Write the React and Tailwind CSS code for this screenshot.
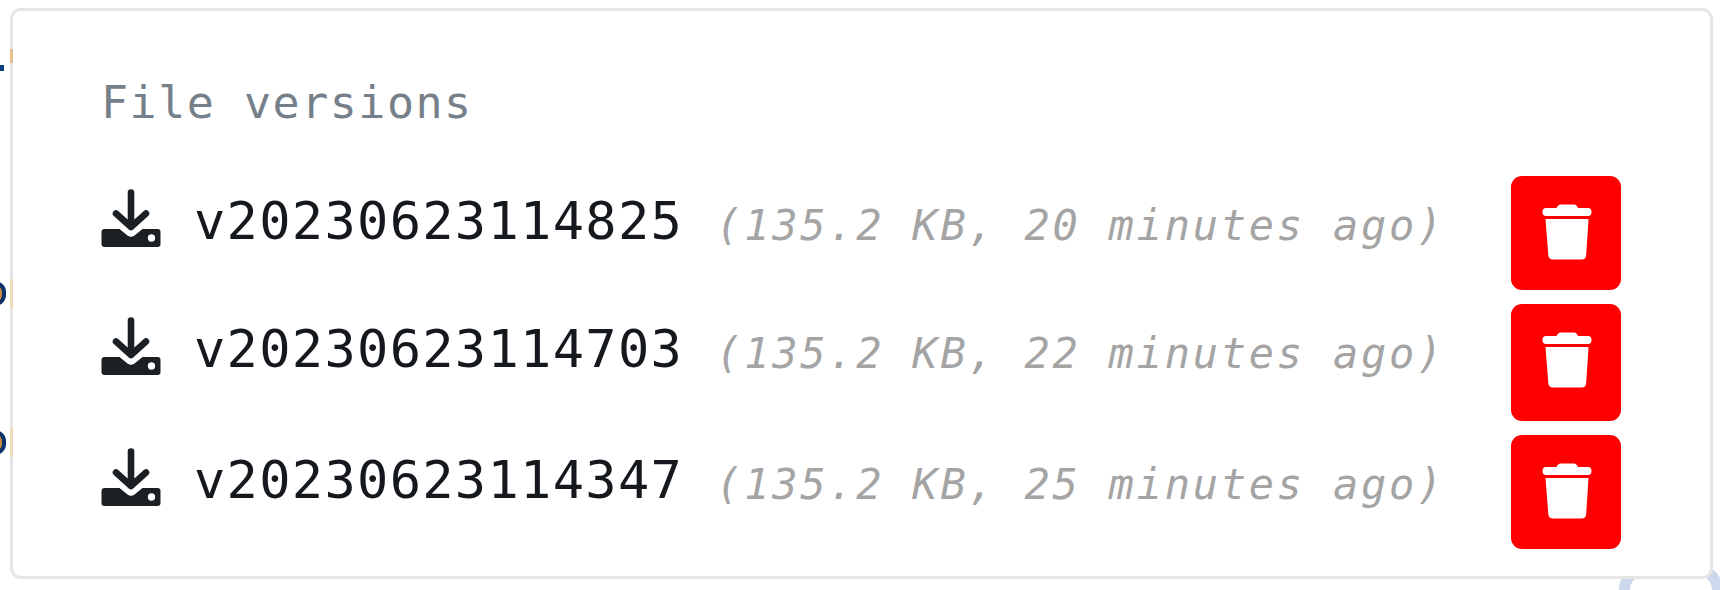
import React from "react";

function DownloadIcon() {
  return (
    <svg viewBox="0 0 60 60" className="h-[60px] w-[60px] shrink-0" fill="none">
      <path d="M30 4.500V37M15 25.500 30 39 45 25.500" stroke="#1b2025" strokeWidth="6.600" strokeLinecap="round" strokeLinejoin="round" />
      <path d="M24 33H36L30 40Z" fill="#1b2025" />
      <path fillRule="evenodd" fill="#1b2025" d="M3.500 41H18.500L26.500 47.500Q30 50 33.500 47.500L41.500 41H56.500Q59.500 41 59.500 44V56Q59.500 59 56.500 59H3.500Q.5 59 .5 56V44Q.5 41 3.500 41ZM50.500 46.300A3.700 3.700 0 1 0 50.500 53.700A3.700 3.700 0 1 0 50.500 46.300Z" />
    </svg>
  );
}

function TrashIcon() {
  return (
    <svg viewBox="0 0 50 56" className="h-[56px] w-[50px]" fill="white">
      <path d="M4 4H14.500Q16 .5 18.500 .5H32Q34.500 .5 36 4H46Q49.500 4 49.500 8T46 12H4Q.5 12 .5 8T4 4Z" />
      <path d="M3.500 15H46.500L44.200 51Q43.800 55.500 39.500 55.500H11Q6.700 55.500 6.300 51Z" />
    </svg>
  );
}

function CutGlyph() {
  return (
    <div className="flex h-[25px] w-[6px] justify-end overflow-hidden">
      <div className="h-[25px] w-[22px] shrink-0 rounded-full border-[4px] border-[#0c326c] bg-[#c98b3f]" />
    </div>
  );
}

const versions = [
  { name: "v20230623114825", info: "(135.2 KB, 20 minutes ago)", button: "h-[114px]" },
  { name: "v20230623114703", info: "(135.2 KB, 22 minutes ago)", button: "h-[117px]" },
  { name: "v20230623114347", info: "(135.2 KB, 25 minutes ago)", button: "h-[114px]" },
];

export default function App() {
  return (
    <div className="relative flex h-[590px] w-[1720px] overflow-hidden bg-white font-['DejaVu_Sans_Mono',monospace]">
      {/* Edge of the code listing behind the popup */}
      <div className="flex w-[10px] shrink-0 flex-col items-start pt-[65px]">
        <div className="mb-[210px] h-[6px] w-[4px] bg-[#0b4080]" />
        <div className="flex flex-col gap-[124px]">
          <CutGlyph />
          <CutGlyph />
        </div>
      </div>
      <div className="absolute left-[1619px] top-[564px] h-[110px] w-[104px] rounded-[26px] border-[11px] border-[#cdd8ec]" />

      <main className="relative mt-[8px] flex h-[571px] w-[1703px] shrink-0 flex-col rounded-[11px] border-[3px] border-[#e6e6e6] bg-white pl-[88px] pr-[89px] pt-[62px]">
        <h1 className="whitespace-nowrap text-[45px] leading-[60px] tracking-[1.5px] text-[#76808a]">File versions</h1>
        <ul className="mt-[43px] flex flex-col gap-[14px]">
          {versions.map((v) => (
            <li key={v.name} className="flex items-start justify-between">
              <div className="flex items-start pt-[12px]">
                <DownloadIcon />
                <p className="flex items-baseline pl-[33px] pt-[1px] leading-[64px]">
                  <span className="text-[52px] tracking-[1.3px] text-[#15191d]">{v.name}</span>
                  <span className="relative top-px whitespace-nowrap pl-[33px] text-[42px] italic tracking-[2.750px] text-[#a4a4a4]">{v.info}</span>
                </p>
              </div>
              <button className={"flex w-[110px] shrink-0 items-start justify-center rounded-[11px] bg-[#ff0000] pl-[2px] pt-[28px] " + v.button} aria-label="Delete version">
                <TrashIcon />
              </button>
            </li>
          ))}
        </ul>
        <i className="absolute -left-[3px] top-[38px] h-[14px] w-[3px] bg-[#e6bd90]" />
        <i className="absolute -left-[3px] top-[268px] h-[30px] w-[3px] bg-[#ecdcb8]" />
        <i className="absolute -left-[3px] top-[416px] h-[30px] w-[3px] bg-[#ecdcb8]" />
      </main>
    </div>
  );
}
